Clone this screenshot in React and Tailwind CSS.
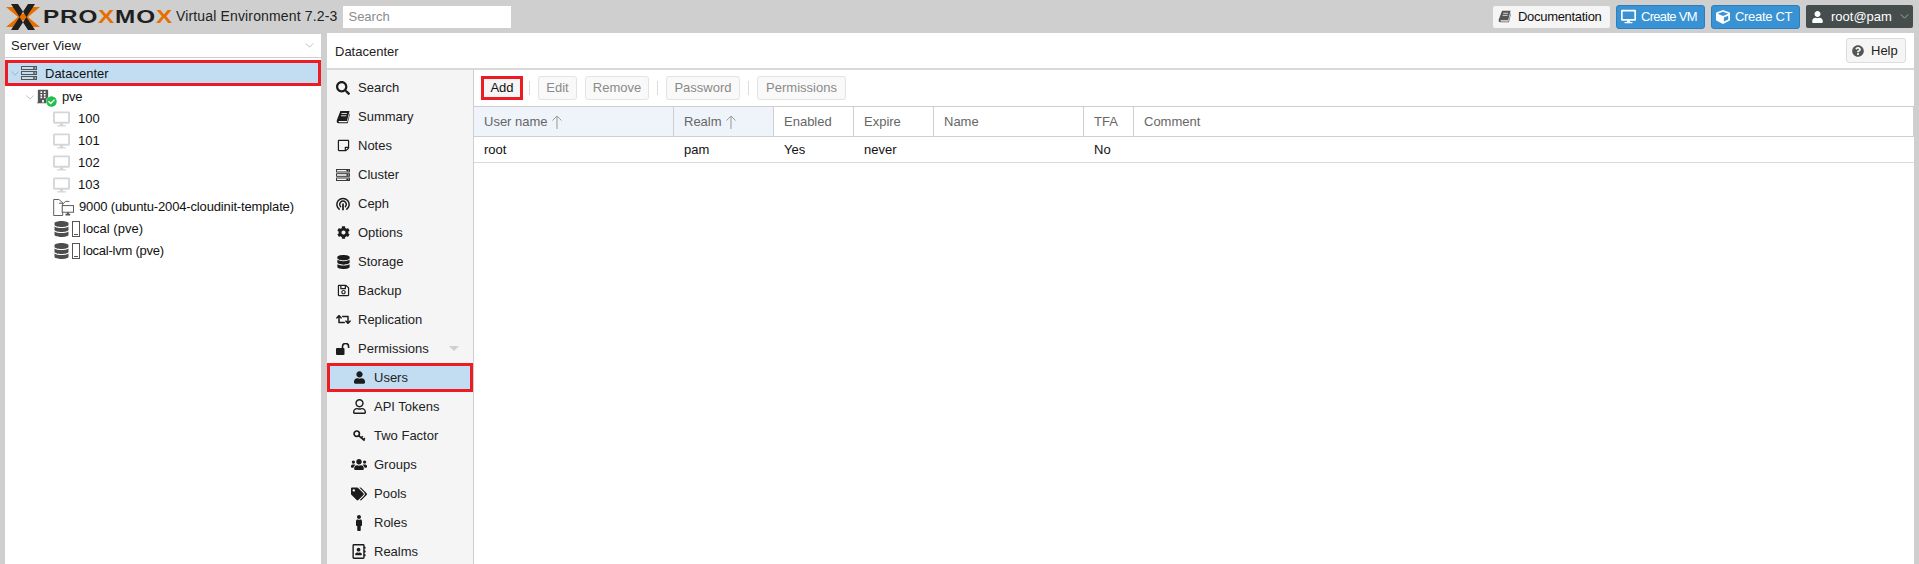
import React from "react";
import {
  FaSearch, FaRegStickyNote, FaCog, FaDatabase, FaRegSave, FaRetweet,
  FaUser, FaRegUser, FaUsers, FaTags, FaMale, FaRegAddressBook,
  FaQuestionCircle, FaDesktop, FaCube, FaCheckCircle, FaBuilding,
} from "react-icons/fa";

const Chevron = ({ className }) => (
  <svg viewBox="0 0 10 6" className={className} fill="none" stroke="currentColor" strokeWidth="1">
    <path d="M0.5 0.5 L5 5 L9.5 0.5" />
  </svg>
);

const LogoMark = () => (
  <svg viewBox="0 0 34 26" className="w-[34px] h-[26px] shrink-0">
    <path d="M0 3 H9 L17 10 L25 3 H34 L22 13 L34 23 H25 L17 16 L9 23 H0 L12 13 Z" fill="#e57000" />
    <path d="M5 0 H12 L29 26 H22 Z M29 0 H22 L5 26 H12 Z" fill="#1f1f1f" />
  </svg>
);

const BookIcon = ({ className }) => (
  <svg viewBox="0 0 16 16" className={className} fill="currentColor">
    <path d="M5 1 H15.5 L12.5 12.5 H3.6 C2.8 12.5 2.7 14 3.6 14 H12.8 L15.6 4 L16 4.6 L13.4 15.2 H3 C1 15.2 0.4 13.4 1 11.4 Z" />
    <path d="M6.4 4 H12.4 M5.8 6.6 H11.8" stroke="#f5f5f5" strokeWidth="1" />
  </svg>
);

const ServerIcon = ({ className }) => (
  <svg viewBox="0 0 16 14" className={className} fill="none" stroke="currentColor">
    <rect x="0.5" y="0.5" width="15" height="3" strokeWidth="1" />
    <rect x="0.5" y="5.5" width="15" height="3" strokeWidth="1" />
    <rect x="0.5" y="10.5" width="15" height="3" strokeWidth="1" />
    <path d="M12 2 H14.5 M12 7 H14.5 M12 12 H14.5" strokeWidth="1.5" />
  </svg>
);

const CephIcon = ({ className }) => (
  <svg viewBox="0 0 16 16" className={className} fill="none" stroke="currentColor" strokeWidth="1.7">
    <path d="M4.2 14.5 A7 7 0 1 1 11.8 14.5" />
    <path d="M5.8 11.5 A3.8 3.8 0 1 1 10.2 11.5" />
    <path d="M8 7.5 V15" strokeWidth="2" />
  </svg>
);

const UnlockIcon = ({ className }) => (
  <svg viewBox="0 0 14 12" className={className} fill="currentColor">
    <rect x="0" y="5" width="8.5" height="7" rx="1" />
    <path d="M6.5 5 V3.5 A3 3 0 0 1 12.6 3.5 V5" fill="none" stroke="currentColor" strokeWidth="1.6" />
  </svg>
);

const KeyIcon = ({ className }) => (
  <svg viewBox="0 0 14 13" className={className} fill="none" stroke="currentColor">
    <circle cx="4" cy="4" r="2.9" strokeWidth="1.8" />
    <path d="M6 6 L12.5 11.5 M9 8.5 L10.5 6.8 M11.3 10.5 L12.8 8.8" strokeWidth="1.8" />
  </svg>
);

const DiskIcons = () => (
  <span className="flex items-center shrink-0 w-[37px] text-[#4d4d4d]">
    <FaDatabase className="w-[15px] h-[16px]" />
    <svg viewBox="0 0 8 16" className="w-[8px] h-[16px] ml-[3px]" fill="none" stroke="#555">
      <rect x="0.5" y="0.5" width="7" height="15" />
      <path d="M2 13.5 H6" />
    </svg>
  </span>
);

const Monitor = () => (
  <FaDesktop className="w-[17px] h-[16px] text-[#d6d6d6] shrink-0 mr-[8px]" />
);

const TemplateIcon = () => (
  <svg viewBox="0 0 26 18" className="w-[25px] h-[17px] shrink-0" fill="none" stroke="#555">
    <path d="M0.5 17.5 V0.5 H6 L10 4 V17.5 Z" />
    <path d="M6 4.5 H11 L13 2.5 H17" />
    <rect x="9.5" y="7" width="12" height="7" fill="#fff" />
    <path d="M13 16.5 H18 M15.5 14 V16.5" strokeWidth="2" />
  </svg>
);

const menu = [
  { label: "Search", Icon: FaSearch, size: "w-[14px] h-[14px]" },
  { label: "Summary", Icon: BookIcon, size: "w-[14px] h-[14px]" },
  { label: "Notes", Icon: FaRegStickyNote, size: "w-[13px] h-[13px]" },
  { label: "Cluster", Icon: ServerIcon, size: "w-[14px] h-[12px]" },
  { label: "Ceph", Icon: CephIcon, size: "w-[14px] h-[14px]" },
  { label: "Options", Icon: FaCog, size: "w-[13px] h-[13px]" },
  { label: "Storage", Icon: FaDatabase, size: "w-[13px] h-[14px]" },
  { label: "Backup", Icon: FaRegSave, size: "w-[13px] h-[13px]" },
  { label: "Replication", Icon: FaRetweet, size: "w-[15px] h-[13px]" },
  { label: "Permissions", Icon: UnlockIcon, size: "w-[14px] h-[12px]", caret: true },
  { label: "Users", Icon: FaUser, size: "w-[11px] h-[13px]", sub: true, active: true },
  { label: "API Tokens", Icon: FaRegUser, size: "w-[13px] h-[15px]", sub: true },
  { label: "Two Factor", Icon: KeyIcon, size: "w-[13px] h-[12px]", sub: true },
  { label: "Groups", Icon: FaUsers, size: "w-[16px] h-[15px]", sub: true },
  { label: "Pools", Icon: FaTags, size: "w-[16px] h-[14px]", sub: true },
  { label: "Roles", Icon: FaMale, size: "w-[14px] h-[16px]", sub: true },
  { label: "Realms", Icon: FaRegAddressBook, size: "w-[14px] h-[15px]", sub: true },
];

const columns = [
  { label: "User name", w: "w-[200px]", sorted: true, value: "root" },
  { label: "Realm", w: "w-[100px]", sorted: true, value: "pam" },
  { label: "Enabled", w: "w-[80px]", value: "Yes" },
  { label: "Expire", w: "w-[80px]", value: "never" },
  { label: "Name", w: "w-[150px]", value: "" },
  { label: "TFA", w: "w-[50px]", value: "No" },
  { label: "Comment", w: "flex-1", value: "" },
];

const ToolButton = ({ children, className }) => (
  <div className={`h-[24px] flex items-center justify-center rounded-[3px] border border-[#e3e3e3] bg-[#f9f9f9] text-[#8a8a8a] ${className}`}>
    {children}
  </div>
);

const Sep = ({ className = "" }) => <div className={`w-px h-[14px] bg-[#dcdcdc] ${className}`} />;

const App = () => {
  return (
    <div className="w-[1919px] h-[564px] overflow-hidden bg-[#cfcfcf] text-[13px] text-[#111] flex flex-col font-['Liberation_Sans',Arial,sans-serif]">
      <header className="h-[33px] shrink-0 flex items-center pl-[6px] pr-[6px]">
        <LogoMark />
        <div className="ml-[3px] w-[133px] text-[18px] leading-none font-black tracking-[0.6px] whitespace-nowrap text-[#1f1f1f] origin-left scale-x-[1.35]">
          PRO<span className="text-[#e57000]">X</span>MO<span className="text-[#e57000]">X</span>
        </div>
        <span className="text-[14px] tracking-[0.15px] text-[#222] whitespace-nowrap">Virtual Environment 7.2-3</span>
        <div className="ml-[6px] w-[168px] h-[22px] bg-white flex items-center pl-[5px] text-[#8b8b8b]">Search</div>
        <div className="ml-auto flex items-center gap-[6px]">
          <div className="w-[117px] h-[22px] rounded-[2px] bg-[#f5f5f5] flex items-center pl-[5px] gap-[7px]">
            <BookIcon className="w-[13px] h-[13px] text-[#555]" />
            <span className="tracking-[-0.3px]">Documentation</span>
          </div>
          <div className="w-[89px] h-[24px] rounded-[3px] bg-[#3892d4] border border-[#2d7fbb] text-white flex items-center pl-[4px] gap-[5px]">
            <FaDesktop className="w-[15px] h-[15px]" />
            <span className="tracking-[-0.7px]">Create VM</span>
          </div>
          <div className="w-[89px] h-[24px] rounded-[3px] bg-[#3892d4] border border-[#2d7fbb] text-white flex items-center pl-[4px] gap-[5px]">
            <FaCube className="w-[14px] h-[14px]" />
            <span className="tracking-[-0.3px]">Create CT</span>
          </div>
          <div className="w-[107px] h-[23px] rounded-[2px] bg-[#464d4d] text-white flex items-center pl-[6px]">
            <FaUser className="w-[11px] h-[12px]" />
            <span className="ml-[8px]">root@pam</span>
            <Chevron className="w-[9px] h-[5px] ml-[8px] text-[#b5b5b5]" />
          </div>
        </div>
      </header>

      <div className="flex-1 flex min-h-0 pl-[5px] pr-[5px]">
        <aside className="w-[316px] shrink-0 flex flex-col">
          <div className="h-[23px] mt-px bg-white flex items-center justify-between pl-[6px] pr-[7px] text-[#222]">
            <span>Server View</span>
            <Chevron className="w-[9px] h-[5px] text-[#b0b0b0]" />
          </div>
          <div className="flex-1 bg-white mt-px">
            <div className="h-[2px]" />
            <div className="h-[26px] bg-[#c2ddf2] border-[3px] border-[#ed1c24] flex items-center pl-[3px]">
              <Chevron className="w-[8px] h-[5px] shrink-0 text-[#8fa9bc]" />
              <ServerIcon className="w-[16px] h-[14px] text-[#555] ml-[2px]" />
              <span className="ml-[8px] pt-px text-[#111]">Datacenter</span>
            </div>
            <div className="h-[22px] flex items-center pl-[21px]">
              <Chevron className="w-[8px] h-[5px] text-[#b5b5b5]" />
              <span className="relative ml-[3px] w-[16px] h-[16px] shrink-0">
                <FaBuilding className="w-[12px] h-[15px] text-[#555]" />
                <FaCheckCircle className="absolute -right-[4px] bottom-[-2px] w-[11px] h-[11px] text-[#21bf4b] bg-white rounded-full" />
              </span>
              <span className="ml-[9px] tracking-[-0.2px]">pve</span>
            </div>
            {["100", "101", "102", "103"].map((id) => (
              <div key={id} className="h-[22px] flex items-center pl-[48px]">
                <Monitor />
                <span>{id}</span>
              </div>
            ))}
            <div className="h-[22px] flex items-center pl-[48px]">
              <TemplateIcon />
              <span className="ml-[1px] tracking-[-0.15px]">9000 (ubuntu-2004-cloudinit-template)</span>
            </div>
            <div className="h-[22px] flex items-center pl-[49px]">
              <DiskIcons />
              <span className="ml-[-8px]">local (pve)</span>
            </div>
            <div className="h-[22px] flex items-center pl-[49px]">
              <DiskIcons />
              <span className="ml-[-8px] tracking-[-0.25px]">local-lvm (pve)</span>
            </div>
          </div>
        </aside>

        <main className="ml-[6px] flex-1 bg-white flex flex-col min-w-0">
          <div className="h-[37px] shrink-0 flex items-center justify-between border-b-2 border-[#d9d9d9] pl-[8px] pr-[8px]">
            <span className="pt-[2px] text-[#222]">Datacenter</span>
            <div className="w-[60px] h-[25px] rounded-[3px] border border-[#dcdcdc] bg-[#f5f5f5] flex items-center pl-[5px] gap-[7px]">
              <FaQuestionCircle className="w-[12px] h-[12px] text-[#555]" />
              <span className="text-[#222]">Help</span>
            </div>
          </div>
          <div className="flex-1 flex min-h-0">
            <nav className="w-[147px] shrink-0 bg-[#f5f5f5] border-r border-[#cfcfcf] pt-[3px]">
              {menu.map(({ label, Icon, size, sub, caret, active }) => (
                <div
                  key={label}
                  className={`h-[29px] flex items-center ${sub ? "pl-[25px]" : "pl-[9px]"} ${
                    active ? "bg-[#c2ddf2] border-[3px] border-[#ed1c24] !pl-[22px]" : ""
                  } text-[#222]`}
                >
                  <span className="w-[14px] h-[14px] flex items-center justify-center shrink-0 text-[#1c1c1c]">
                    <Icon className={`${size} shrink-0`} />
                  </span>
                  <span className="ml-[8px]">{label}</span>
                  {caret && (
                    <span className="ml-[20px] w-0 h-0 border-l-[5px] border-r-[5px] border-t-[5px] border-l-transparent border-r-transparent border-t-[#d0d0d0]" />
                  )}
                </div>
              ))}
            </nav>
            <section className="flex-1 min-w-0">
              <div className="h-[36px] flex items-center pl-[7px] gap-[8px]">
                <div className="w-[42px] h-[24px] border-[3px] border-[#ed1c24] bg-[#f5f5f5] flex items-center justify-center text-[#111]">
                  Add
                </div>
                <Sep className="-ml-[2px]" />
                <ToolButton className="w-[39px]">Edit</ToolButton>
                <ToolButton className="w-[64px]">Remove</ToolButton>
                <Sep />
                <ToolButton className="w-[74px]">Password</ToolButton>
                <Sep />
                <ToolButton className="w-[89px]">Permissions</ToolButton>
              </div>
              <div className="h-[31px] flex border-t border-b border-[#cfcfcf] text-[#666]">
                {columns.map((c) => (
                  <div
                    key={c.label}
                    className={`${c.w} flex items-center pl-[10px] border-r border-[#cfcfcf] ${c.sorted ? "bg-[#eef4fa]" : ""}`}
                  >
                    <span>{c.label}</span>
                    {c.sorted && (
                      <svg viewBox="0 0 10 14" className="w-[10px] h-[14px] ml-[4px]" fill="none" stroke="#999">
                        <path d="M5 14 V1 M0.5 5.5 L5 1 L9.5 5.5" />
                      </svg>
                    )}
                  </div>
                ))}
              </div>
              <div className="h-[26px] flex border-b border-[#d9d9d9] text-[#111]">
                {columns.map((c) => (
                  <div key={c.label} className={`${c.w} flex items-center pl-[10px]`}>
                    {c.value}
                  </div>
                ))}
              </div>
            </section>
          </div>
        </main>
      </div>
    </div>
  );
};

export default App;
